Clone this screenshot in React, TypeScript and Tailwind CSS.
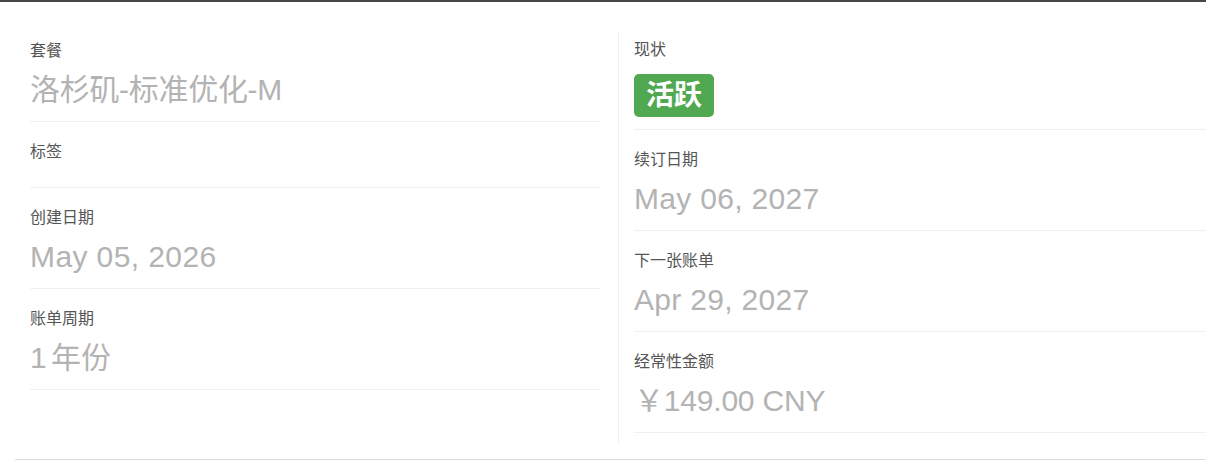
import React from "react";

const font = { fontFamily: '"Liberation Sans", "Noto Sans CJK SC", sans-serif' };

function Row({
  label,
  value,
  first,
  extra = "",
}: {
  label: string;
  value?: React.ReactNode;
  first?: boolean;
  extra?: string;
}) {
  return (
    <div className={`${first ? "pt-0" : "pt-[18px]"} ${value !== undefined ? "pb-[13px]" : "pb-[14px]"} border-b border-[#f0f0f0]`}>
      <div className="text-[16px] leading-6 text-[#555555] mb-[9px]">{label}</div>
      {value !== undefined && (
        <div className={`text-[30px] leading-[36px] text-[#b3b3b3] whitespace-nowrap ${extra}`}>{value}</div>
      )}
    </div>
  );
}

export default function App() {
  return (
    <div className="w-[1206px] h-[465px] bg-white overflow-hidden" style={font}>
      <div className="h-[2px] bg-[#474747]" />
      <div className="mt-[30px] ml-[15px] border-b border-[#dcdcdc] pb-[16px]">
        <div className="flex pl-[15px]">
          <div className="w-[571px] pt-[7px]">
            <Row first label="套餐" value="洛杉矶-标准优化-M" extra="tracking-[-0.3px]" />
            <Row label="标签" />
            <Row label="创建日期" value="May 05, 2026" extra="tracking-[0.4px]" />
            <Row label="账单周期" value="1 年份" extra="[word-spacing:-4px]" />
          </div>
          <div className="flex-1 ml-[17px] border-l border-[#eeeeee] pl-[15px] pt-[6px] pb-[10px]">
            <div className="pb-[12px] border-b border-[#f0f0f0]">
              <div className="text-[16px] leading-6 text-[#555555] mb-[12px]">现状</div>
              <div className="inline-flex h-[43px] items-center rounded-[5px] bg-[#50a850] px-[12px] text-[28px] font-bold text-white leading-none">
                活跃
              </div>
            </div>
            <Row label="续订日期" value="May 06, 2027" extra="tracking-[0.3px]" />
            <Row label="下一张账单" value="Apr 29, 2027" extra="tracking-[0.3px]" />
            <Row label="经常性金额" value="￥149.00 CNY" extra="tracking-[-0.2px]" />
          </div>
        </div>
      </div>
    </div>
  );
}
